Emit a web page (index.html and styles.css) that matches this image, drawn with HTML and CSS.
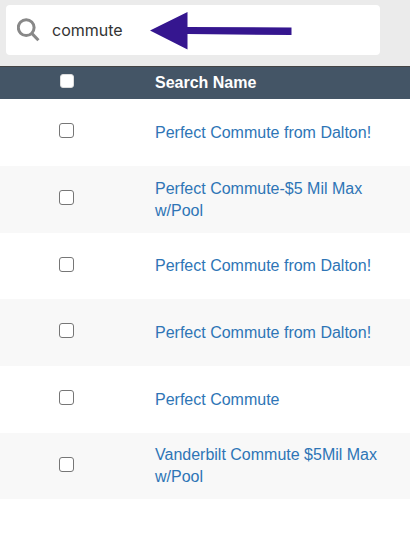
FILE: index.html
```
<!DOCTYPE html>
<html lang="en">
<head>
	<meta charset="UTF-8">
	<title>Saved Searches</title>
	<link rel="stylesheet" href="styles.css">
</head>
<body>
	<div class="toolbar">
		<form class="search">
			<label for="filter" aria-label="Search">
				<svg class="search-icon" viewBox="0 0 24 24">
					<circle cx="9.200" cy="9.600" r="7.900"/>
					<path d="M14.800 15.400L21.400 22.200"/>
				</svg>
			</label>
			<input type="text" id="filter" name="filter" value="commute">
			<svg class="arrow" viewBox="0 0 142 38">
				<path d="M0 18.500L37.500 0V15L141.500 15.500V23L37.500 22V37.500Z"/>
			</svg>
		</form>
	</div>

	<table class="results">
		<thead>
			<tr>
				<th class="check"><input type="checkbox" aria-label="Select all"></th>
				<th>Search Name</th>
			</tr>
		</thead>
		<tbody>
			<tr>
				<td class="check"><input type="checkbox" id="s1" aria-labelledby="n1"></td>
				<td><a href="#" id="n1">Perfect Commute from Dalton!</a></td>
			</tr>
			<tr>
				<td class="check"><input type="checkbox" id="s2" aria-labelledby="n2"></td>
				<td><a href="#" id="n2">Perfect Commute-$5 Mil Max w/Pool</a></td>
			</tr>
			<tr>
				<td class="check"><input type="checkbox" id="s3" aria-labelledby="n3"></td>
				<td><a href="#" id="n3">Perfect Commute from Dalton!</a></td>
			</tr>
			<tr>
				<td class="check"><input type="checkbox" id="s4" aria-labelledby="n4"></td>
				<td><a href="#" id="n4">Perfect Commute from Dalton!</a></td>
			</tr>
			<tr>
				<td class="check"><input type="checkbox" id="s5" aria-labelledby="n5"></td>
				<td><a href="#" id="n5">Perfect Commute</a></td>
			</tr>
			<tr>
				<td class="check"><input type="checkbox" id="s6" aria-labelledby="n6"></td>
				<td><a href="#" id="n6">Vanderbilt Commute $5Mil Max w/Pool</a></td>
			</tr>
		</tbody>
	</table>
</body>
</html>
```
FILE: styles.css
```
body {
	margin: 0;
	background: #fff;
	font-family: "Liberation Sans", Arial, sans-serif;
	font-size: 16px;
	line-height: 22px;
}

.toolbar {
	padding: 5px 30px 11px 6px;
	background: #ebebeb;
	border-bottom: 1px solid #444;
}
.search {
	position: relative;
	display: flex;
	align-items: center;
	height: 50px;
	padding-left: 11px;
	background: #fff;
	border-radius: 4px;
}
.search label {
	display: flex;
}
.search-icon {
	width: 24px;
	height: 24px;
	fill: none;
	stroke: #888;
	stroke-width: 3;
}
.search input {
	flex: 1;
	min-width: 0;
	margin: 0;
	padding: 0 0 0 11px;
	border: 0;
	outline: 0;
	background: none;
	color: #333;
	font-family: Inter, sans-serif;
	font-size: 16px;
	line-height: 24px;
}
/* pointer lies over the text box */
.arrow {
	position: absolute;
	top: 7px;
	left: 144px;
	width: 142px;
	height: 38px;
	fill: #35168f;
	pointer-events: none;
}

.results {
	width: 100%;
	border-collapse: collapse;
	table-layout: fixed;
}
.results th {
	height: 32px;
	padding: 0 30px 0 22px;
	background: #445566;
	color: #fff;
	text-align: left;
}
.results td {
	height: 67px;
	padding: 0 30px 0 22px;
}
.results tr:nth-child(3n) td {
	height: 66px;
}
.results tbody tr:nth-child(even) {
	background: #f8f8f8;
}
.results .check {
	width: 133px;
	padding: 0 0 4px;
	text-align: center;
	box-sizing: border-box;
}
.results a {
	color: #2e75b6;
	text-decoration: none;
}
.results a:hover {
	text-decoration: underline;
}

.check input {
	appearance: none;
	display: block;
	width: 15px;
	height: 15px;
	margin: 0 auto;
	border: 1px solid #767676;
	border-radius: 3px;
	background: #fff;
}
.check input:checked {
	background: #2e75b6;
}
.results th input {
	width: 14px;
	height: 14px;
	border-color: #ddd;
}
```
